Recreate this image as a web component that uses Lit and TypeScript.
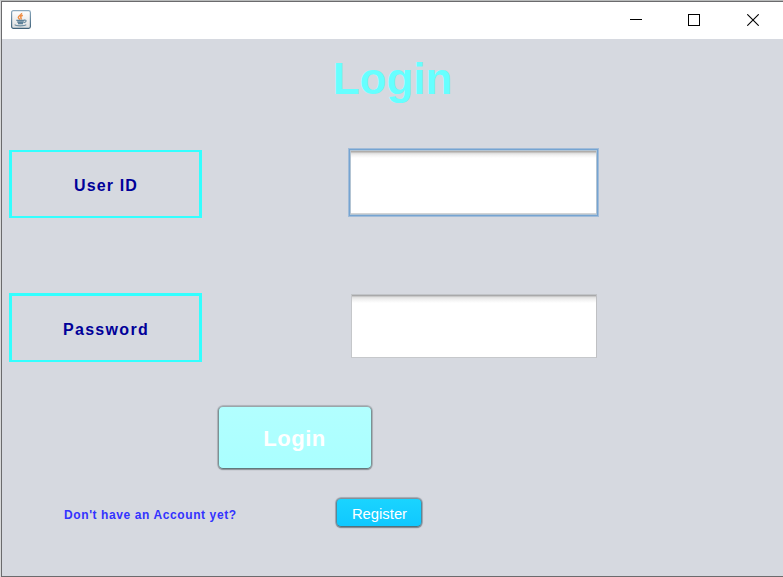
import { LitElement, html, css } from "lit";
import { customElement } from "lit/decorators.js";

@customElement("title-bar")
class TitleBar extends LitElement {
  static styles = css`
    :host { display: flex; height: 37px; background: #fff; align-items: flex-start; }
    .logo { margin: 8px 0 0 9px; }
    .spacer { flex: 1; }
    .control { width: 58px; height: 36px; display: flex; justify-content: center; align-items: center; }
    .close { width: 60px; }
    svg { display: block; }
  `;
  render() {
    return html`
      <svg class="logo" width="20" height="19" viewBox="0 0 20 19">
        <defs>
          <linearGradient id="face" x1="0" y1="0" x2="0" y2="1">
            <stop offset="0" stop-color="#fff" /><stop offset="1" stop-color="#dcdedf" />
          </linearGradient>
          <linearGradient id="edge" x1="0" y1="0" x2="0" y2="1">
            <stop offset="0" stop-color="#8aa8bd" /><stop offset="1" stop-color="#3f6179" />
          </linearGradient>
        </defs>
        <rect x=".6" y=".6" width="18.8" height="17.8" rx="1.8" fill="url(#face)" stroke="url(#edge)" stroke-width="1.2" />
        <path d="M10.6 3C11 5 7.2 5.6 7.3 7.5C7.4 8.6 8.5 9 9 9.5M11.8 5.2C9.8 6 9.2 6.8 10 7.8C10.4 8.5 10.2 9 9.8 9.5" fill="none" stroke="#ef8e45" stroke-width="1.5" />
        <path d="M5.3 10.4H13.5M6.2 12H12.8M7 13.5H12" fill="none" stroke="#5f8299" stroke-width="1.3" />
        <path d="M13 10.2C16.2 9.6 15.3 12.3 12.8 12.6M3.8 14.6C4.5 16.3 14 16.2 15.2 14.7" fill="none" stroke="#6f8fa3" stroke-width="1.2" />
      </svg>
      <span class="spacer"></span>
      <span class="control"><svg width="12" height="12"><path d="M0 5.5H12" stroke="#000" /></svg></span>
      <span class="control"><svg width="12" height="12"><rect x=".5" y=".5" width="11" height="11" fill="none" stroke="#000" /></svg></span>
      <span class="control close"><svg width="12" height="12"><path d="M.3 .3L11.7 11.7M11.7 .3L.3 11.7" stroke="#000" stroke-width="1.1" /></svg></span>
    `;
  }
}

@customElement("app-root")
class AppRoot extends LitElement {
  static styles = css`
    :host {
      display: block; box-sizing: border-box; width: 783px; height: 577px; overflow: hidden;
      border-top: 1px solid #b9bbbb; border-left: 1px solid #d8d9da;
      font-family: "Liberation Sans", Arial, sans-serif;
    }
    .window {
      box-sizing: border-box; height: 576px; background: #d6d9e0;
      border: solid #6b6b6d; border-width: 1px 0 1px 1px;
    }
    .content { display: flow-root; }
    h1 {
      margin: 15px 0 0; height: 50px; line-height: 50px; text-align: center;
      font-size: 44px; color: #66ffff;
    }
    .row { display: flex; align-items: flex-start; }
    .user { margin-top: 44px; }
    .password { margin-top: 75px; }
    .label {
      box-sizing: border-box; width: 193px; height: 68px; margin: 2px 0 0 7px; padding: 3px 0 0 1px;
      border: solid #33ffff; border-width: 2px 3px;
      display: flex; justify-content: center; align-items: center;
      font-size: 16px; font-weight: bold; letter-spacing: 1.15px; color: #000099;
    }
    .password .label { height: 69px; margin-top: 0; border-top-width: 3px; letter-spacing: 1.3px; }
    .field {
      box-sizing: border-box; border: 0; outline: 0; padding: 4px 8px; border-radius: 0;
      font: 16px "Liberation Sans", sans-serif;
    }
    .user .field {
      width: 251px; height: 69px; margin-left: 146px;
      border: 1px solid #a1bcd9;
      background: linear-gradient(#b0adaa 4px, #dcdcdc 5px, #f1f1f1 7px, #fff 10px) border-box;
      box-shadow: inset 0 0 0 1px #75a4d2, inset 0 0 0 2px #b3c4d3, inset 0 -1px 0 2px #d3d4d5;
    }
    .password .field {
      width: 246px; height: 64px; margin: 1px 0 0 149px;
      border: 1px solid; border-color: #c1c4c8 #bfc0c3 #c6c8cb #c5c7ca;
      background: linear-gradient(#a9a9aa 1px, #b4b4b4 1px, #dedede 2px, #eee 4px, #fff 8px);
    }
    button {
      display: block; box-sizing: border-box; border: 1px solid;
      border-radius: 5px;
      font-family: inherit; color: #fff;
    }
    .login {
      width: 154px; height: 63px; margin: 44px 0 0 216px; padding: 3px 1px 0 0;
      background: linear-gradient(#b2ffff, #aaffff);
      font-size: 22px; font-weight: bold; letter-spacing: .5px;
      border-color: #9aa6aa #7d9094 #62797c #7d9094;
      box-shadow: 0 0 0 .5px #a4a8ae, 0 1px 1px #7b8086, 0 0 1px 1px #bdc0c6;
    }
    .signup { margin-top: 28px; }
    .hint {
      width: 273px; box-sizing: border-box; padding-left: 62px; line-height: 36px;
      font-size: 12px; font-weight: bold; letter-spacing: .6px; color: #3333ff; white-space: nowrap;
    }
    .register {
      width: 86px; height: 29px; margin: 1px 0 0 61px; padding: 3px 0 0 1px;
      background: linear-gradient(#1ad4ff, #10c8ff); font-size: 14.8px;
      border-color: #82919b #5a8798 #52717c #5a8798;
      box-shadow: 0 0 0 .5px #959ba3, 0 1px 1px #70767e, 0 0 1px 1px #b7bac1;
    }
  `;
  render() {
    return html`
      <div class="window">
        <title-bar></title-bar>
        <main class="content">
          <h1>Login</h1>
          <div class="row user">
            <div class="label">User ID</div>
            <input class="field" type="text" aria-label="User ID" />
          </div>
          <div class="row password">
            <div class="label">Password</div>
            <input class="field" type="password" aria-label="Password" />
          </div>
          <button class="login">Login</button>
          <div class="row signup">
            <span class="hint">Don't have an Account yet?</span>
            <button class="register">Register</button>
          </div>
        </main>
      </div>
    `;
  }
}
